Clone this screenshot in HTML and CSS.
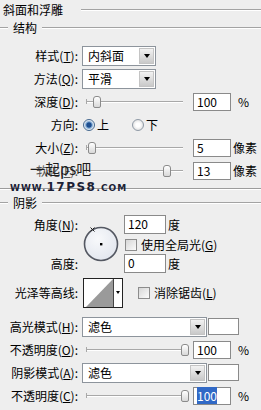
FILE: index.html
```html
<!DOCTYPE html>
<html>
<head>
<meta charset="utf-8">
<link rel="stylesheet" href="styles.css">
</head>
<body>
<div class="panel">
  <div class="title"><span>斜面和浮雕</span><i class="rule"></i></div>
  <div class="group"><i class="rule lead"></i><span>结构</span><i class="rule"></i></div>
  <div class="rows">
    <div class="row"><span class="lbl">样式(<u>T</u>):</span><div class="select short"><span class="val">内斜面</span><b class="btn"><i class="tri"></i></b></div></div>
    <div class="row"><span class="lbl">方法(<u>Q</u>):</span><div class="select short"><span class="val">平滑</span><b class="btn"><i class="tri"></i></b></div></div>
    <div class="row"><span class="lbl">深度(<u>D</u>):</span><div class="slider"><i class="thumb" style="left:11px"></i></div><div class="num">100</div><span class="unit pct">%</span></div>
    <div class="row"><span class="lbl">方向:</span><i class="radio on"></i><span class="rtext">上</span><i class="radio"></i><span class="rtext">下</span></div>
    <div class="row"><span class="lbl">大小(<u>Z</u>):</span><div class="slider"><i class="thumb" style="left:6px"></i></div><div class="num">5</div><span class="unit">像素</span></div>
    <div class="row"><span class="lbl soft">软化(<u>F</u>):</span><div class="slider"><i class="thumb" style="left:81px"></i></div><div class="num">13</div><span class="unit">像素</span></div>
  </div>
  <div class="sep"></div>
  <div class="group g2"><i class="rule lead"></i><span>阴影</span><i class="rule"></i></div>
  <div class="angle">
    <span class="lbl a1">角度(<u>N</u>):</span>
    <div class="dial">
      <svg width="36" height="36" viewBox="0 0 36 36">
        <defs><radialGradient id="dg" cx="40%" cy="35%" r="70%"><stop offset="0" stop-color="#f8f9fb"/><stop offset="1" stop-color="#e2e6ee"/></radialGradient></defs>
        <circle cx="18" cy="18" r="16.5" fill="url(#dg)" stroke="#545862" stroke-width="1.6"/>
        <rect x="17" y="17" width="2.4" height="2.4" fill="#000"/>
        <path d="M7.5 1.5 L11.5 5.5 M11.5 1.5 L7.5 5.5" stroke="#222" stroke-width="1"/>
      </svg>
    </div>
    <div class="acell a1"><div class="num n2">120</div><span class="unit deg">度</span></div>
    <div class="acell a2"><i class="check"></i><span class="ctext">使用全局光(<u>G</u>)</span></div>
    <span class="lbl a3">高度:</span>
    <div class="acell a3"><div class="num n2">0</div><span class="unit deg">度</span></div>
  </div>
  <div class="row contour-row"><span class="lbl">光泽等高线:</span>
    <div class="contour">
      <svg class="cimg" width="29" height="28" viewBox="0 0 29 28"><rect width="29" height="28" fill="#fff"/><polygon points="2,28 29,0 29,28" fill="#9a9a9a"/></svg>
      <b class="cbtn"><i class="tri"></i></b>
    </div>
    <i class="check c2"></i><span class="ctext">消除锯齿(<u>L</u>)</span>
  </div>
  <div class="rows r2">
    <div class="row"><span class="lbl">高光模式(<u>H</u>):</span><div class="select long"><span class="val">滤色</span><b class="btn"><i class="tri"></i></b></div><i class="swatch"></i></div>
    <div class="row"><span class="lbl">不透明度(<u>O</u>):</span><div class="slider"><i class="thumb" style="left:99px"></i></div><div class="num">100</div><span class="unit pct">%</span></div>
    <div class="row"><span class="lbl">阴影模式(<u>A</u>):</span><div class="select long"><span class="val">滤色</span><b class="btn"><i class="tri"></i></b></div><i class="swatch"></i></div>
    <div class="row"><span class="lbl">不透明度(<u>C</u>):</span><div class="slider"><i class="thumb" style="left:99px"></i></div><div class="num"><span class="hl">100</span></div><span class="unit pct">%</span></div>
  </div>
  <div class="wm">
    <span class="wm1">一起ps吧</span>
    <span class="wm2"><small>WWW.</small>17PS8<small>.COM</small></span>
  </div>
</div>
</body>
</html>
```
FILE: styles.css
```css
* { box-sizing: border-box; }
html, body { margin: 0; padding: 0; }
body {
  background: #eeeeee;
  font: 12px/1 "Noto Sans CJK SC", "Noto Sans", sans-serif;
  color: #000;
  width: 261px;
  height: 410px;
  overflow: hidden;
}
i, b { display: block; font-style: normal; }
u { text-decoration: underline; text-underline-offset: 1px; }
.panel { position: relative; width: 261px; height: 410px; }

.rule { height: 2px; border-top: 1px solid #a3a3a3; border-bottom: 1px solid #ffffff; flex: 1; }

.title { display: flex; align-items: center; height: 20px; padding-left: 3px; }
.title .rule { margin-left: 18px; }

.group { display: flex; align-items: center; height: 16px; margin-bottom: 8px; }
.group .lead { flex: none; width: 8px; }
.group span { margin: 0 5px; }
.g2 { margin-top: 5px; margin-bottom: 3px; }

.row { display: flex; align-items: center; height: 23px; }
.lbl { flex: none; width: 78px; text-align: right; margin-right: 4px; white-space: nowrap; }
.lbl.soft { color: #555; }

.select {
  display: flex; height: 20px; background: #fff;
  border: 1px solid #8d949c;
}
.select.short { width: 74px; }
.select.long { width: 125px; }
.select .val { flex: 1; padding-left: 5px; line-height: 18px; }
.btn {
  width: 15px; margin: 1px; display: flex; align-items: center; justify-content: center;
  background: linear-gradient(#f2f2f2, #c9c9c9);
  border: 1px solid #c4c4c4;
}
.tri { width: 0; height: 0; border-left: 3px solid transparent; border-right: 3px solid transparent; border-top: 4px solid #000; }

.slider { position: relative; width: 107px; height: 14px; flex: none; }
.slider::before {
  content: ""; position: absolute; left: 4px; right: 6px; top: 6px;
  border-top: 1px solid #a8a8a8; border-bottom: 1px solid #fff;
}
.slider::after { content: ""; position: absolute; left: 4px; top: 4px; width: 1px; height: 5px; background: #a8a8a8; }
.thumb {
  position: absolute; top: 1px; width: 8px; height: 12px;
  border: 1px solid #8b8b8b; border-radius: 3px 3px 2px 2px;
  background: linear-gradient(#ffffff, #d8d8d8);
}

.num {
  flex: none; width: 38px; height: 18px; background: #fff;
  border: 1px solid #8a8a8a; padding-left: 3px; line-height: 16px; margin-left: 4px;
}
.unit { margin-left: 2px; }
.unit.pct { margin-left: 7px; }

.radio { flex: none; width: 12px; height: 12px; border-radius: 50%; border: 1px solid #8f9aa6;
  background: radial-gradient(circle, #ffffff 0 2px, #e4e4e4 5px); margin-left: 1px; }
.radio.on { border-color: #46698f;
  background: radial-gradient(circle, #1f4f8f 0 2.2px, #6f9ccc 3px, #dce7f2 4.5px, #f2f5f8 5px); }
.rtext { margin-left: 2px; margin-right: 22px; }

.sep { margin-top: 6px; height: 2px; border-top: 1px solid #9c9c9c; border-bottom: 1px solid #fff; }

.angle {
  display: grid; grid-template-columns: 78px 38px 1fr; column-gap: 4px;
  grid-template-rows: 21px 19px 19px;
  align-items: center;
}
.angle .lbl { margin-right: 0; width: auto; }
.a1 { grid-row: 1; }
.a2 { grid-row: 2; grid-column: 3; }
.a3 { grid-row: 3; }
.angle .lbl.a1, .angle .lbl.a3 { grid-column: 1; }
.acell { display: flex; align-items: center; grid-column: 3; }
.dial { grid-column: 2; grid-row: 1 / 4; display: flex; justify-content: center; align-items: center; }
.num.n2 { width: 42px; height: 19px; margin-left: 0; }
.unit.deg { margin-left: 2px; }

.check { flex: none; width: 12px; height: 12px; border: 1px solid #8c8c8c;
  background: linear-gradient(135deg, #d6d6d6, #fbfbfb); margin-left: 1px; }
.ctext { margin-left: 4px; }

.contour-row { height: 31px; margin-top: 4px; }
.contour { display: flex; height: 30px; border: 1px solid #222; margin-left: 1px; }
.cimg { display: block; }
.cbtn { width: 9px; background: #fff; border-left: 1px solid #444; display: flex; align-items: center; justify-content: center; }
.cbtn .tri { border-left-width: 2.5px; border-right-width: 2.5px; border-top-width: 3px; }
.check.c2 { margin-left: 15px; }

.r2 { margin-top: 7px; }
.swatch { width: 31px; height: 17px; background: #fff; border: 1px solid #8a8a8a; margin-left: 1px; }
.hl { background: #3169c6; color: #fff; }

.wm { position: absolute; left: 0; top: 0; pointer-events: none; }
.wm1 { position: absolute; left: 30px; top: 161px; font-size: 15px; color: #1d1d1d; white-space: nowrap; line-height: 16px; background: linear-gradient(transparent 0 0); }
.wm2 { position: absolute; left: 10px; top: 181px; font: bold 12px/12px "DejaVu Sans", sans-serif; color: #1c2236; white-space: nowrap; letter-spacing: 1.5px; }
.wm2 small { font-size: 9px; letter-spacing: 1px; }
```
